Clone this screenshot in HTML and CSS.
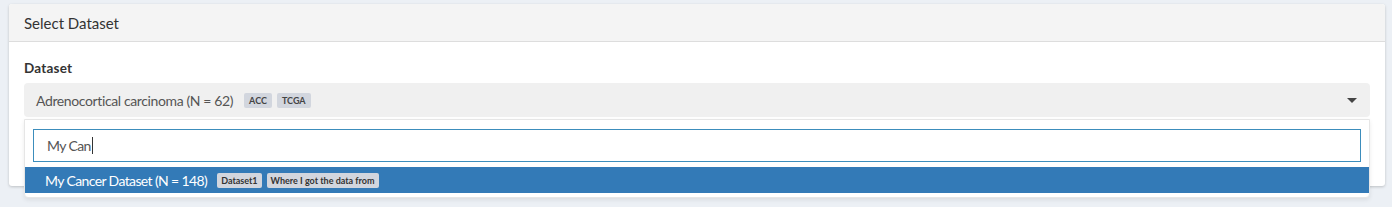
FILE: index.html
```html
<!DOCTYPE html>
<html>
<head>
<meta charset="utf-8">
<link rel="stylesheet" href="styles.css">
</head>
<body>
<div class="page">
  <div class="box">
    <div class="box-header">Select Dataset</div>
    <div class="box-body">
      <div class="label">Dataset</div>
      <div class="select-wrap">
        <div class="select">
          <span class="value">Adrenocortical carcinoma (N = 62)</span>
          <span class="badge">ACC</span>
          <span class="badge">TCGA</span>
          <span class="caret"></span>
        </div>
        <div class="dropdown">
          <div class="search"><span class="typed">My Can</span><span class="cursor"></span></div>
          <div class="option active">
            <span class="value">My Cancer Dataset (N = 148)</span>
            <span class="badge">Dataset1</span>
            <span class="badge">Where I got the data from</span>
          </div>
        </div>
      </div>
    </div>
  </div>
</div>
</body>
</html>
```
FILE: styles.css
```css
* { box-sizing: border-box; }
html, body { margin: 0; padding: 0; background: #ecf0f5; }
body { font-family: Lato, "Noto Sans", sans-serif; color: #333; }
.page { padding: 4px 7px 0 9px; height: 207px; overflow: hidden; }
.box {
  background: #fff;
  border-radius: 3px;
  box-shadow: 0 1px 3px rgba(0,0,0,0.2);
  height: 182px;
}
.box-header {
  height: 38px;
  background: #f4f4f4;
  border-bottom: 1px solid #ddd;
  border-radius: 3px 3px 0 0;
  padding: 0 15px;
  display: flex;
  align-items: center;
  font-size: 15px;
  color: #333;
}
.box-body { padding: 17px 15px 0 15px; }
.label { font-weight: bold; font-size: 13.5px; height: 24px; line-height: 18px; letter-spacing: 0.2px; }
.select-wrap { position: relative; }
.select {
  height: 34px;
  background: #f0f0f0;
  border-radius: 4px;
  display: flex;
  align-items: center;
  padding: 0 12px;
  font-size: 14px;
  color: #555;
}
.select .value { margin-right: 11px; letter-spacing: -0.38px; }
.badge {
  display: inline-flex;
  align-items: center;
  justify-content: center;
  height: 15px;
  padding: 0 5px;
  border-radius: 2px;
  background: #d2d6de;
  color: #444;
  font-size: 9px;
  font-weight: bold;
  margin-right: 5px;
}
.caret {
  margin-left: auto;
  width: 0; height: 0;
  border-left: 5px solid transparent;
  border-right: 5px solid transparent;
  border-top: 5px solid #444;
  margin-right: 1px;
}
.dropdown {
  position: absolute;
  top: 36px;
  left: 0; right: 0;
  height: 79px;
  background: #fff;
  border: 1px solid #e6e6e6;
  border-radius: 0 0 4px 4px;
  box-shadow: 0 2px 4px rgba(0,0,0,0.08);
  padding: 9px 0 0 0;
}
.search {
  margin: 0 8px;
  height: 33px;
  border: 1px solid #3c8dbc;
  display: flex;
  align-items: center;
  padding: 0 13px;
  font-size: 14px;
  color: #555;
}
.typed { letter-spacing: -0.6px; }
.cursor { display: inline-block; width: 1px; height: 17px; background: #333; margin-left: 1px; }
.option {
  margin-top: 5px;
  height: 26px;
  display: flex;
  align-items: center;
  padding: 0 20px;
  font-size: 14px;
}
.option.active { background: #337ab7; color: #fff; }
.option .value { margin-right: 10px; letter-spacing: -0.62px; }
.option .badge { font-size: 9px; padding: 0 4px; height: 15px; color: #333; }
```
